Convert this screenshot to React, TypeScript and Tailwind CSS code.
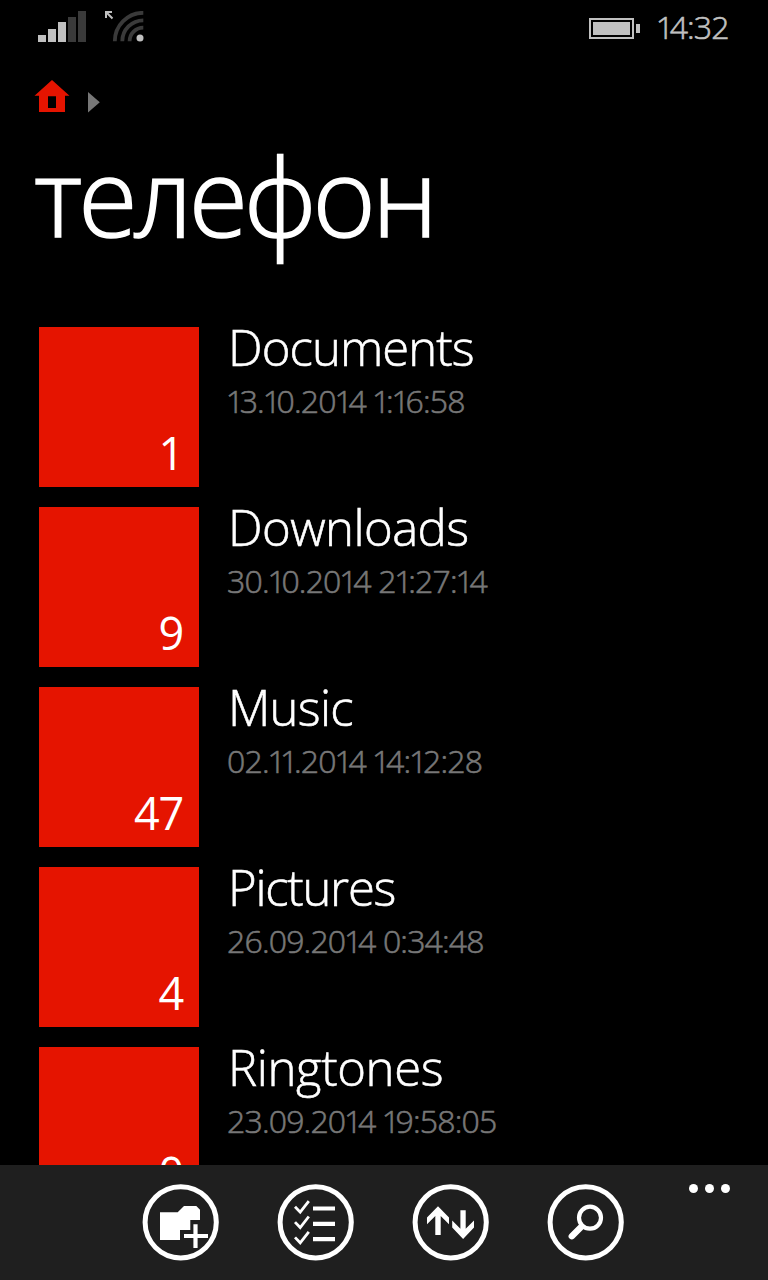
import type { ReactNode } from "react";

const folders = [
  { name: "Documents", date: "13.10.2014 1:16:58", count: 1, tracking: "tracking-[-0.9px]" },
  { name: "Downloads", date: "30.10.2014 21:27:14", count: 9, tracking: "tracking-[-0.55px]" },
  { name: "Music", date: "02.11.2014 14:12:28", count: 47, tracking: "tracking-[-0.7px]" },
  { name: "Pictures", date: "26.09.2014 0:34:48", count: 4, tracking: "tracking-[-1.25px]" },
  { name: "Ringtones", date: "23.09.2014 19:58:05", count: 0, tracking: "tracking-[-0.35px]" },
];

// proportional figures: the "1" takes less room than the other digits
function Figures({ text }: { text: string }) {
  return text
    .split(/(1)/)
    .map((part, i) =>
      part === "1" ? (
        <span key={i} className="-ml-[1.3px] tracking-[-4.3px]">
          1
        </span>
      ) : (
        part
      )
    );
}

function StatusBar() {
  return (
    <div className="flex h-14 shrink-0 items-start justify-between pl-[38px] pr-[39px] text-[#c0c0c0]">
      <div className="flex gap-[19px] pt-[11px]">
        <svg width="48" height="31" viewBox="0 0 48 31">
          <path d="M0 24h8v7H0zM10 18h8v13h-8zM20 11h8v20h-8z" fill="#c0c0c0" />
          <path d="M30 6h8v25h-8zM40 0h8v31h-8z" fill="#3a3a3a" />
        </svg>
        <svg width="39" height="31" viewBox="0 0 39 31" fill="none">
          <path d="M1 7V1h6M1 1l6.5 6.5" stroke="#c0c0c0" strokeWidth="2" />
          <path
            d="M9.8 30.3A28.5 28.5 0 0 1 38.3 1.8M17.3 30.3A21 21 0 0 1 38.3 9.3M24.6 30.3A13.7 13.7 0 0 1 38.3 16.6"
            stroke="#3a3a3a"
            strokeWidth="3.8"
          />
          <circle cx="35" cy="27" r="3.5" fill="#c0c0c0" />
        </svg>
      </div>
      <div className="flex items-start">
        <div className="mt-[18px] h-[21px] w-[45px] border-2 border-[#c0c0c0] p-[2px]">
          <div className="h-full bg-[#c0c0c0]" />
        </div>
        <div className="ml-[2px] mt-6 h-[9px] w-1 bg-[#c0c0c0]" />
        <span className="ml-[17px] mt-[7px] w-[72px] whitespace-nowrap text-[32px] leading-10 tracking-[-0.9px] [-webkit-text-stroke:0.6px_currentColor]">
          <Figures text="14:32" />
        </span>
      </div>
    </div>
  );
}

function Breadcrumb() {
  return (
    <div className="flex h-14 shrink-0 items-start gap-[18px] pl-[34px] pt-6">
      <svg width="36" height="32" viewBox="0 0 36 32" fill="#e51400">
        <path fillRule="evenodd" d="M18 0l17.5 15.7H31V32H5V15.7H.5zM14 16.3V28h8V16.3z" />
      </svg>
      <svg className="mt-3" width="12" height="21" viewBox="0 0 12 21" fill="#777777">
        <path d="M0 0l11.8 10.3L0 20.5z" />
      </svg>
    </div>
  );
}

function AppBarButton({ label, children }: { label: string; children: ReactNode }) {
  return (
    <button aria-label={label} className="h-[76px] w-[76px]">
      <svg className="overflow-visible" width="76" height="76" viewBox="0.5 -0.5 76 76" fill="none" stroke="white">
        <circle cx="38.2" cy="37.8" r="35.6" strokeWidth="5" />
        {children}
      </svg>
    </button>
  );
}

function AppBar() {
  return (
    <div className="flex h-[115px] shrink-0 items-start bg-[#1f1f1f] pl-[143px] pr-[38px] pt-[19px]">
      <div className="flex gap-[59px]">
        <AppBarButton label="new folder">
          <path
            d="M17.5 27.8h17.7l6.3-6.3h12.3l3.7 3.7v10.3h-9.7v10h-10.3v10h-20z"
            fill="white"
            stroke="none"
          />
          <path d="M53 39.8v23.6M41.5 51.5h24" strokeWidth="4.2" />
        </AppBarButton>
        <AppBarButton label="select">
          <path
            d="M17.5 22.3l5.2 5.4 8.6-11M17.5 37.6l5.2 5.4 8.6-11M17.5 52.9l5.2 5.4 8.6-11"
            strokeWidth="2.8"
          />
          <path d="M35.5 24h22M35.5 39.4h22M35.5 54.7h22" strokeWidth="4.2" />
        </AppBarButton>
        <AppBarButton label="sort">
          <path
            d="M25.5 21.8l11 11.2v6.8l-8.3-8.3v19h-5.4v-19l-8.3 8.3V33zM50.6 54.4L39.7 43v-7l8.2 8.3V25.8h5.3v18.5l8.3-8.3v7z"
            fill="white"
            stroke="none"
          />
        </AppBarButton>
        <AppBarButton label="search">
          <circle cx="42.5" cy="33.2" r="11" strokeWidth="4.2" />
          <path d="M33.8 42.2l-9.5 9.5" strokeWidth="6.4" strokeLinecap="round" />
        </AppBarButton>
      </div>
      <div className="ml-auto flex gap-[7px]">
        <span className="h-[9px] w-[9px] rounded-full bg-white" />
        <span className="h-[9px] w-[9px] rounded-full bg-white" />
        <span className="h-[9px] w-[9px] rounded-full bg-white" />
      </div>
    </div>
  );
}

export default function App() {
  return (
    <div className="flex h-[1280px] w-[768px] flex-col overflow-hidden bg-black font-['Open_Sans','Noto_Sans',sans-serif] font-light text-white">
      <StatusBar />
      <Breadcrumb />
      <h1 className="mt-6 h-[120px] shrink-0 pl-[34px] text-[108px] leading-[120px] tracking-[-3.9px] [-webkit-text-stroke:1.5px_currentColor]">
        телефон
      </h1>
      <ul className="mt-[51px] flex min-h-0 flex-1 flex-col gap-5 overflow-hidden pl-[39px] pt-5">
        {folders.map((f) => (
          <li key={f.name} className="flex h-40 shrink-0 gap-[29px]">
            <div className="flex w-40 items-end justify-end bg-[#e51400] pb-[6px] pr-4">
              <span className="text-[45px] font-normal leading-[56px] tracking-[-1.2px]">{f.count}</span>
            </div>
            <div className="-mt-2">
              <p className={`text-[49px] leading-[56px] [-webkit-text-stroke:0.6px_currentColor] ${f.tracking}`}>
                {f.name}
              </p>
              <p className="-ml-px mt-[6px] text-[32px] leading-10 tracking-[-0.82px] text-[#777777] [-webkit-text-stroke:0.6px_currentColor]">
                <Figures text={f.date} />
              </p>
            </div>
          </li>
        ))}
      </ul>
      <AppBar />
    </div>
  );
}
